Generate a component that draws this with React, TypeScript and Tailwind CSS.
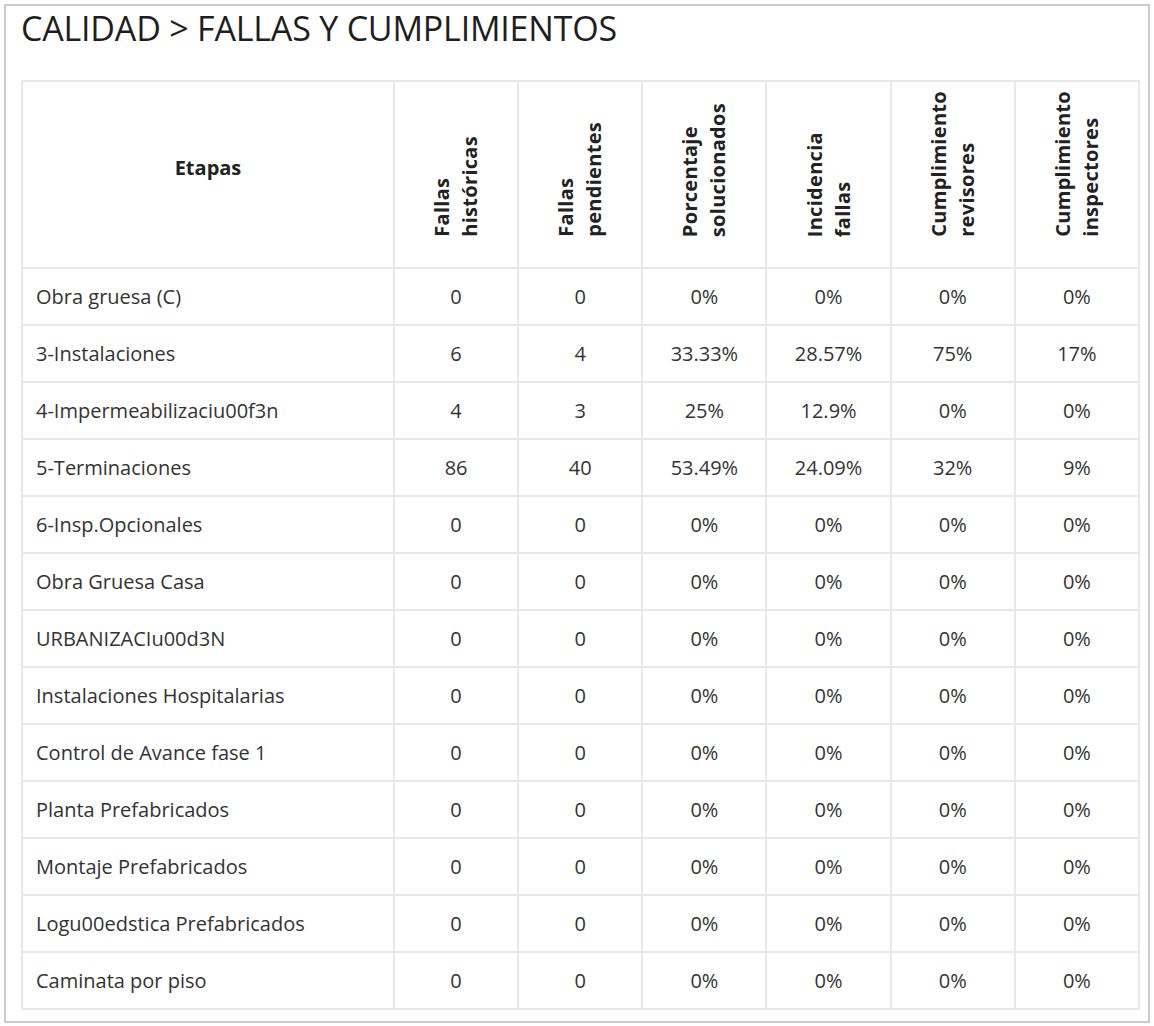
import React from 'react';

const rows: [string, string, string, string, string, string, string][] = [
  ['Obra gruesa (C)', '0', '0', '0%', '0%', '0%', '0%'],
  ['3-Instalaciones', '6', '4', '33.33%', '28.57%', '75%', '17%'],
  ['4-Impermeabilizaciu00f3n', '4', '3', '25%', '12.9%', '0%', '0%'],
  ['5-Terminaciones', '86', '40', '53.49%', '24.09%', '32%', '9%'],
  ['6-Insp.Opcionales', '0', '0', '0%', '0%', '0%', '0%'],
  ['Obra Gruesa Casa', '0', '0', '0%', '0%', '0%', '0%'],
  ['URBANIZACIu00d3N', '0', '0', '0%', '0%', '0%', '0%'],
  ['Instalaciones Hospitalarias', '0', '0', '0%', '0%', '0%', '0%'],
  ['Control de Avance fase 1', '0', '0', '0%', '0%', '0%', '0%'],
  ['Planta Prefabricados', '0', '0', '0%', '0%', '0%', '0%'],
  ['Montaje Prefabricados', '0', '0', '0%', '0%', '0%', '0%'],
  ['Logu00edstica Prefabricados', '0', '0', '0%', '0%', '0%', '0%'],
  ['Caminata por piso', '0', '0', '0%', '0%', '0%', '0%'],
];

const headers: [string, string][] = [
  ['Fallas', 'históricas'],
  ['Fallas', 'pendientes'],
  ['Porcentaje', 'solucionados'],
  ['Incidencia', 'fallas'],
  ['Cumplimiento', 'revisores'],
  ['Cumplimiento', 'inspectores'],
];

export default function App() {
  return (
    <div className="bg-white min-h-[1026px] p-[4px] font-['Open_Sans',sans-serif]">
      <div className="w-[1146px] h-[1019px] border-2 border-[#cbcbcb] px-[15px] pt-[2px]">
        <h1 className="text-[34px] leading-[40px] font-normal text-[#1e1e1e] tracking-[-0.2px]">
          CALIDAD &gt; FALLAS Y CUMPLIMIENTOS
        </h1>

        <table className="mt-[32px] w-[1119px] table-fixed border-collapse text-[20px] leading-[28px] text-[#333]">
          <colgroup>
            <col className="w-[372px]" />
            {headers.map((_, i) => (
              <col key={i} />
            ))}
          </colgroup>
          <thead>
            <tr className="h-[187px]">
              <th className="border-2 border-[#e8e8ec] align-middle pb-[14px] font-bold text-[#222]">Etapas</th>
              {headers.map(([a, b], i) => (
                <th key={i} className="border-2 border-[#e8e8ec] align-bottom pb-[30px] font-bold text-[#222]">
                  <div className="flex justify-center">
                    <div className="[writing-mode:vertical-rl] rotate-180 text-start whitespace-nowrap tracking-[0.3px]">
                      {a}
                      <br />
                      {b}
                    </div>
                  </div>
                </th>
              ))}
            </tr>
          </thead>
          <tbody>
            {rows.map((r, i) => (
              <tr key={i} className="h-[57px]">
                <td className="border-2 border-[#e8e8ec] px-[13px] text-left">{r[0]}</td>
                {r.slice(1).map((v, j) => (
                  <td key={j} className="border-2 border-[#e8e8ec] text-center">
                    {v}
                  </td>
                ))}
              </tr>
            ))}
          </tbody>
        </table>
      </div>
    </div>
  );
}
